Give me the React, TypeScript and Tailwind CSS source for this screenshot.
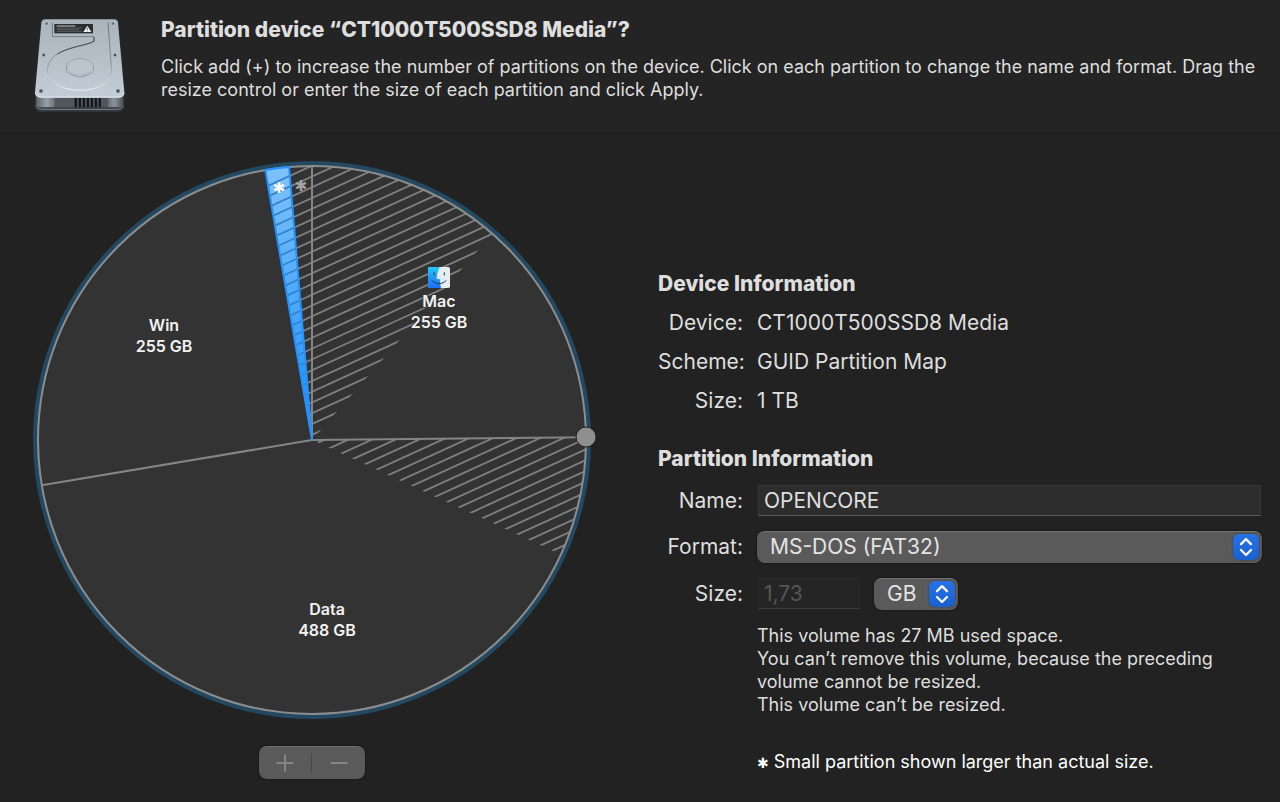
import React from 'react';

const CENTER = 280;
const RADIUS = 274;

// Angles are in degrees, clockwise from twelve o'clock
const pointAt = (angle: number, radius = RADIUS) => {
  const rad = (angle * Math.PI) / 180;
  return {
    x: CENTER + radius * Math.sin(rad),
    y: CENTER - radius * Math.cos(rad),
  };
};

const wedge = (from: number, to: number) => {
  const a = pointAt(from);
  const b = pointAt(to);
  return `M${CENTER} ${CENTER} L${a.x} ${a.y} A${RADIUS} ${RADIUS} 0 0 1 ${b.x} ${b.y} Z`;
};

const SLICE_EDGES = [0, 89.4, 260.5];
const SELECTED = { from: 350.2, to: 355.2 };
const USED_SPACE = [
  { id: 'used-small', from: 355.2, to: 360 },
  { id: 'used-mac', from: 0, to: 41.2 },
  { id: 'used-data', from: 89.4, to: 114.7 },
];

const HATCH_STEP = 10.76;
const HATCH_LINES = Array.from({ length: 50 }, (_, i) => 5.7 + i * HATCH_STEP);

const PARTITIONS = [
  { name: 'Win', size: '255 GB', x: 132, y: 171 },
  { name: 'Mac', size: '255 GB', x: 407, y: 147 },
  { name: 'Data', size: '488 GB', x: 295, y: 455 },
];

const DEVICE_ROWS = [
  { label: 'Device:', value: 'CT1000T500SSD8 Media' },
  { label: 'Scheme:', value: 'GUID Partition Map' },
  { label: 'Size:', value: '1 TB' },
];

const Hatch: React.FC<{ clip: string; className: string }> = ({ clip, className }) => (
  <g clipPath={`url(#${clip})`} className={className} strokeWidth="1.8">
    {HATCH_LINES.map((y) => (
      <line key={y} x1={CENTER - 280} y1={y + 128} x2={CENTER + 280} y2={y - 128} />
    ))}
  </g>
);

const DriveIcon = () => (
  <svg viewBox="36 39 288 288" className="size-24 shrink-0" aria-hidden="true">
    <defs>
      <linearGradient id="drive-top" x1="0" y1="0" x2="0" y2="1">
        <stop offset="0" stopColor="#a9b4bc" />
        <stop offset="0.5" stopColor="#b4bfc8" />
        <stop offset="1" stopColor="#c3ced8" />
      </linearGradient>
      <linearGradient id="drive-front" x1="0" y1="0" x2="1" y2="0">
        <stop offset="0" stopColor="#5d646a" />
        <stop offset="0.12" stopColor="#99a1a8" />
        <stop offset="0.25" stopColor="#596066" />
        <stop offset="0.75" stopColor="#454b50" />
        <stop offset="0.9" stopColor="#8b9399" />
        <stop offset="1" stopColor="#4c5257" />
      </linearGradient>
      <linearGradient id="drive-swirl" x1="0" y1="0" x2="0" y2="1">
        <stop offset="0" stopColor="#6a747c" />
        <stop offset="0.6" stopColor="#87929b" />
        <stop offset="1" stopColor="#eef3f7" />
      </linearGradient>
    </defs>
    <path d="M46 262 H312 V302 Q312 320 294 320 H64 Q46 320 46 302 Z" fill="#343a3f" />
    <path d="M49 262 H309 V300 Q307 307 294 307 H64 Q51 307 49 300 Z" fill="url(#drive-front)" />
    <path d="M104 274 H264 V306 H104 Z" fill="#50565b" />
    <path d="M47 302 Q52 313 66 313 H292 Q306 313 311 302" fill="none" stroke="#7d858b" strokeWidth="3" />
    <g fill="#15181a">
      {[164, 176, 188, 200, 212, 224, 236].map((x) => (
        <rect key={x} x={x} y="279" width="7" height="28" />
      ))}
    </g>
    <path
      d="M76 43 H282 Q292 43 294 53 L313 262 Q313 277 298 278 H60 Q45 277 45 262 L64 53 Q66 43 76 43 Z"
      fill="url(#drive-top)"
    />
    <path d="M46 264 Q48 276 61 276 H297 Q311 276 312 264" fill="none" stroke="#dde6ed" strokeWidth="3" />
    <path
      d="M97 53 V95 H222 V109 C196 122 142 127 112 147 C78 170 72 206 100 231 C138 264 222 264 256 233 C271 219 276 206 274 187 L264 53"
      fill="none"
      stroke="url(#drive-swirl)"
      strokeWidth="3"
    />
    <path d="M222 97 V109 C196 122 142 127 112 147" fill="none" stroke="#3b434a" strokeWidth="2.5" />
    <ellipse cx="180" cy="189" rx="42" ry="26" fill="#75808a" />
    <ellipse cx="180" cy="186" rx="41" ry="25" fill="#bac5ce" stroke="#8e99a2" strokeWidth="2" />
    <path d="M141 194 C150 218 211 218 219 194" fill="none" stroke="#e3eaf0" strokeWidth="2" />
    <rect x="103" y="57" width="116" height="28" fill="#2b2e30" />
    <path d="M110 63 H166" stroke="#bfc3c6" strokeWidth="3" />
    <path d="M110 69 H184 M110 74 H178 M110 79 H186" stroke="#73787c" strokeWidth="2" />
    <path d="M202 62 L214 81 H190 Z" fill="#f4f4f4" />
    <path d="M202 68 V75 M202 77 V79" stroke="#333333" strokeWidth="2" />
    <g fill="#47525b" stroke="#d9e1e7" strokeWidth="1">
      <circle cx="80" cy="56" r="4" />
      <circle cx="279" cy="56" r="4" />
      <circle cx="71" cy="150" r="5" />
      <circle cx="285" cy="150" r="5" />
      <circle cx="63" cy="258" r="6" />
      <circle cx="294" cy="258" r="6" />
    </g>
  </svg>
);

const FinderIcon = () => (
  <svg x="396" y="107" width="22" height="21" viewBox="0 0 66 63">
    <defs>
      <linearGradient id="finder-blue" x1="0" y1="0" x2="0" y2="1">
        <stop offset="0" stopColor="#27c6fb" />
        <stop offset="1" stopColor="#1c6ff2" />
      </linearGradient>
    </defs>
    <rect width="66" height="63" rx="5" fill="#e6ebf4" />
    <path d="M5 0 H37 C31 11 28 22 27 35 H37 C37 45 38 54 40 63 H5 Q0 63 0 58 V5 Q0 0 5 0 Z" fill="url(#finder-blue)" />
    <path d="M37 0 C31 11 28 22 27 35 H37 C37 45 38 54 40 63" fill="none" stroke="#f3f6fa" strokeWidth="2" />
    <path d="M18 17 V24 M49 17 V24" stroke="#1c3a5c" strokeWidth="3" strokeLinecap="round" />
    <path d="M12 41 C24 53 42 53 54 41" fill="none" stroke="#1c3a5c" strokeWidth="3" strokeLinecap="round" />
  </svg>
);

const PartitionChart = () => (
  <svg viewBox="0 0 560 560" className="w-[560px] max-w-full overflow-visible" role="group" aria-label="Partition map">
    <defs>
      {USED_SPACE.map((area) => (
        <clipPath key={area.id} id={area.id}>
          <path d={wedge(area.from, area.to)} />
        </clipPath>
      ))}
      <clipPath id="selected-slice">
        <path d={wedge(SELECTED.from, SELECTED.to)} />
      </clipPath>
      <linearGradient id="selected-fill" gradientUnits="userSpaceOnUse" x1="0" y1="6" x2="0" y2="280">
        <stop offset="0" stopColor="#80c1fa" />
        <stop offset="0.5" stopColor="#4aa9fb" />
        <stop offset="1" stopColor="#158aff" />
      </linearGradient>
    </defs>

    <circle cx={CENTER} cy={CENTER} r="276" className="fill-[#333333] stroke-[#23485f]" strokeWidth="6" />

    {USED_SPACE.map((area) => (
      <Hatch key={area.id} clip={area.id} className="stroke-[#808080]" />
    ))}
    <circle cx={CENTER} cy={CENTER} r={RADIUS} fill="none" className="stroke-[#8c8c8c]" strokeWidth="2" />
    {SLICE_EDGES.map((angle) => {
      const end = pointAt(angle);
      return (
        <line key={angle} x1={CENTER} y1={CENTER} x2={end.x} y2={end.y} className="stroke-[#858585]" strokeWidth="2" />
      );
    })}

    {/* Selected partition */}
    <path d={wedge(SELECTED.from, SELECTED.to)} fill="url(#selected-fill)" />
    <Hatch clip="selected-slice" className="stroke-[#3583c9]" />
    <path
      d={wedge(SELECTED.from, SELECTED.to)}
      fill="none"
      className="stroke-[#2491ff]"
      strokeWidth="2"
      strokeLinejoin="round"
    />

    <text x="247" y="33" textAnchor="middle" className="fill-white font-['DejaVu_Sans'] text-[15px]">✱</text>
    <text x="269" y="31" textAnchor="middle" className="fill-[#a3a3a3] font-['DejaVu_Sans'] text-[15px]">✱</text>

    {/* Resize control */}
    <circle cx="554" cy="277" r="10" className="fill-[#8f8f8f] stroke-[#242424]" strokeWidth="1" />

    <FinderIcon />
    {PARTITIONS.map((partition) => (
      <text
        key={partition.name}
        textAnchor="middle"
        className="fill-[#f2f2f2] stroke-[#333333] text-[16px] font-semibold [paint-order:stroke]"
        strokeWidth="2"
      >
        <tspan x={partition.x} y={partition.y}>{partition.name}</tspan>
        <tspan x={partition.x} y={partition.y + 21}>{partition.size}</tspan>
      </text>
    ))}
  </svg>
);

interface PopUpProps {
  id?: string;
  label?: string;
  options: string[];
  className: string;
}

const PopUp: React.FC<PopUpProps> = ({ id, label, options, className }) => (
  <div className={`relative h-8 ${className}`}>
    <select
      id={id}
      aria-label={label}
      className="h-8 w-full appearance-none rounded-lg border-t border-[#747474] bg-[#5a5a5a] pr-9 pb-px pl-[13px] text-[21px] text-[#e4e4e4] shadow-[0_0_1px_1px_#1a1a1a]"
    >
      {options.map((option) => (
        <option key={option}>{option}</option>
      ))}
    </select>
    <span className="pointer-events-none absolute top-[3px] right-[3px] flex size-[26px] items-center justify-center rounded-md bg-linear-to-b from-[#2672e6] to-[#1a5fcf] shadow-[0_0_2px_#333333]">
      <svg viewBox="0 0 26 26" className="size-[26px]" fill="none" stroke="#f2f5fb" strokeWidth="2.4" strokeLinecap="round" strokeLinejoin="round">
        <path d="M8 10.2 L13 5.2 L18 10.2 M8 16 L13 21 L18 16" />
      </svg>
    </span>
  </div>
);

export default function App() {
  return (
    <div className="min-h-screen bg-[#222222] font-[Inter,sans-serif] text-[#dedede]">
      <header className="flex gap-[33px] border-b border-[#1c1c1c] bg-[#242424] pt-[18px] pr-4 pb-[19px] pl-8">
        <DriveIcon />
        <div>
          <h1 className="text-[21px] leading-6 font-extrabold">Partition device “CT1000T500SSD8 Media”?</h1>
          <p className="mt-[13px] text-[18px] leading-[23px]">
            Click add (+) to increase the number of partitions on the device. Click on each partition to change the
            name and format. Drag the resize control or enter the size of each partition and click Apply.
          </p>
        </div>
      </header>

      <main className="flex">
        <section className="flex shrink-0 flex-col items-center px-8 pt-[26px]">
          <PartitionChart />
          <div className="mt-[26px] flex h-[33px] items-center rounded-lg border-t border-[#6e6e6e] bg-[#5a5a5a] text-[#858585] shadow-[0_0_1px_1px_#1a1a1a]">
            <button type="button" disabled aria-label="Add partition" className="flex h-8 w-[52px] items-center justify-center">
              <svg viewBox="0 0 18 18" className="size-[18px]" stroke="currentColor" strokeWidth="2">
                <path d="M0.5 9 H17.5 M9 0.5 V17.5" />
              </svg>
            </button>
            <span className="h-5 w-px bg-[#474747]" />
            <button type="button" disabled aria-label="Remove partition" className="flex h-8 w-[53px] items-center justify-center">
              <svg viewBox="0 0 18 18" className="size-[18px]" stroke="currentColor" strokeWidth="2">
                <path d="M0.5 9 H17.5" />
              </svg>
            </button>
          </div>
        </section>

        <section className="min-w-0 flex-1 pt-[138px] pr-[18px] pl-[34px] text-[21px] leading-6">
          <h2 className="font-extrabold">Device Information</h2>
          <dl className="mt-[15px] grid grid-cols-[85px_1fr] gap-x-[14px] gap-y-[15px]">
            {DEVICE_ROWS.map((row) => (
              <React.Fragment key={row.label}>
                <dt className="text-right whitespace-nowrap">{row.label}</dt>
                <dd>{row.value}</dd>
              </React.Fragment>
            ))}
          </dl>

          <h2 className="mt-[34px] font-extrabold">Partition Information</h2>
          <form className="mt-[14px] grid grid-cols-[85px_1fr] items-center gap-x-[14px] gap-y-[15px]">
            <label htmlFor="partition-name" className="text-right">Name:</label>
            <div className="flex px-px">
              <input
                id="partition-name"
                defaultValue="OPENCORE"
                className="h-[31px] w-full border border-[#363636] border-b-[#5c5c5c] bg-[#2d2d2d] px-[5px]"
              />
            </div>
            <label htmlFor="partition-format" className="text-right">Format:</label>
            <PopUp id="partition-format" options={['MS-DOS (FAT32)']} className="w-full" />
            <label htmlFor="partition-size" className="text-right">Size:</label>
            <div className="flex items-start gap-[14px] pl-px">
              <input
                id="partition-size"
                defaultValue="1,73"
                disabled
                className="h-[31px] w-[102px] border border-[#2a2a2a] border-b-[#3d3d3d] bg-[#252525] px-[5px] text-[#555555]"
              />
              <PopUp label="Size unit" options={['GB']} className="w-[84px]" />
            </div>
          </form>

          <div className="mt-[14px] ml-[99px] text-[18px] leading-[23px]">
            <p>This volume has 27 MB used space.</p>
            <p>You can’t remove this volume, because the preceding volume cannot be resized.</p>
            <p>This volume can’t be resized.</p>
            <p className="mt-[34px] text-white">
              <span className="font-['DejaVu_Sans'] text-[14px]">✱</span> Small partition shown larger than actual size.
            </p>
          </div>
        </section>
      </main>
    </div>
  );
}
